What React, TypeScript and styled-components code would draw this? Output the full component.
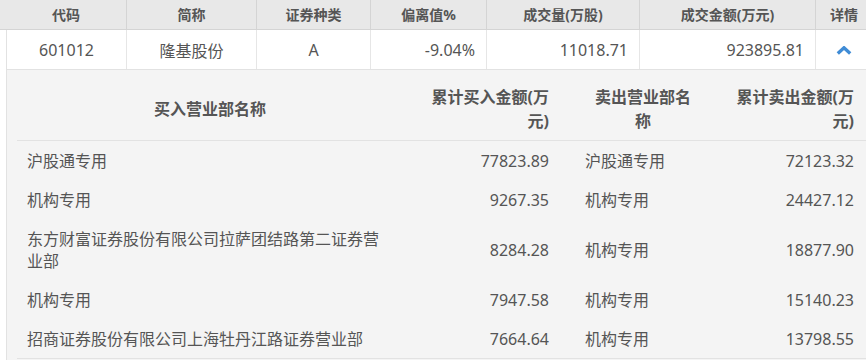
import React from "react";
import styled, { createGlobalStyle } from "styled-components";

const GlobalStyle = createGlobalStyle`
  html, body { margin: 0; padding: 0; background: #ffffff; }
  body {
    font-family: "Noto Sans", "Noto Sans CJK SC", sans-serif;
    color: #555555;
  }
`;

const Page = styled.div`
  width: 866px;
  overflow: hidden;
`;

const HeaderRow = styled.div`
  display: grid;
  grid-template-columns: 127px 130px 114px 116px 153px 176px 50px;
  height: 29px;
  background: #e8e8e8;
  border-bottom: 1px solid #d4d4d4;
`;

const HeadCell = styled.div<{ $first?: boolean; $last?: boolean }>`
  display: flex;
  align-items: center;
  justify-content: center;
  padding-left: ${(p) => (p.$first ? "6px" : p.$last ? "6px" : "0")};
  border-right: ${(p) => (p.$last ? "none" : "1px solid #d4d4d4")};
  font-size: 14px;
  font-weight: 700;
  color: #555555;
  line-height: 29px;
  white-space: nowrap;
`;

const Body = styled.div`
  margin-left: 6px;
  border-left: 1px solid #e2e2e2;
`;

const DataRow = styled.div`
  display: grid;
  grid-template-columns: 120px 130px 114px 116px 153px 176px 1fr;
  height: 39px;
  background: #ffffff;
  border-bottom: 1px solid #e2e2e2;
`;

const Cell = styled.div<{ $align?: "left" | "center" | "right"; $last?: boolean }>`
  display: flex;
  align-items: center;
  justify-content: ${(p) =>
    p.$align === "right" ? "flex-end" : p.$align === "left" ? "flex-start" : "center"};
  padding: 0 ${(p) => (p.$align === "right" ? "11px" : "0")} 0 0;
  border-right: ${(p) => (p.$last ? "none" : "1px solid #e6e6e6")};
  font-size: 16px;
  color: #555555;
  white-space: nowrap;
`;

const ToggleIcon = styled.svg`
  width: 16px;
  height: 9px;
  margin-left: 20px;
  margin-top: 1px;
  display: block;
`;

const DetailPanel = styled.div`
  background: #f4f4f4;
  padding: 8px 0 1px 10px;
`;

const DetailTable = styled.div`
  display: grid;
  grid-template-columns: 386px 156px 154px 1fr;
`;

type Align = "left" | "center" | "right";

const DetailHead = styled.div<{ $align: Align; $pl: number; $pr: number }>`
  display: flex;
  align-items: center;
  justify-content: ${(p) =>
    p.$align === "right" ? "flex-end" : p.$align === "left" ? "flex-start" : "center"};
  text-align: ${(p) => p.$align};
  padding: 7px ${(p) => p.$pr}px 7px ${(p) => p.$pl}px;
  border-bottom: 1px solid #e2e2e2;
  font-size: 16px;
  font-weight: 700;
  line-height: 24px;
  color: #555555;
`;

const DetailCell = styled.div<{ $align: Align; $pl: number; $pr: number; $lastRow?: boolean }>`
  display: flex;
  align-items: center;
  justify-content: ${(p) => (p.$align === "right" ? "flex-end" : "flex-start")};
  text-align: ${(p) => p.$align};
  padding: 9px ${(p) => p.$pr}px 8px ${(p) => p.$pl}px;
  border-bottom: ${(p) => (p.$lastRow ? "1px solid #e2e2e2" : "none")};
  font-size: 16px;
  line-height: 22px;
  color: #555555;
`;

const heads = ["代码", "简称", "证券种类", "偏离值%", "成交量(万股)", "成交金额(万元)", "详情"];

const rows: [string, string, string, string][] = [
  ["沪股通专用", "77823.89", "沪股通专用", "72123.32"],
  ["机构专用", "9267.35", "机构专用", "24427.12"],
  ["东方财富证券股份有限公司拉萨团结路第二证券营业部", "8284.28", "机构专用", "18877.90"],
  ["机构专用", "7947.58", "机构专用", "15140.23"],
  ["招商证券股份有限公司上海牡丹江路证券营业部", "7664.64", "机构专用", "13798.55"],
];

const cols: { align: Align; headAlign: Align; pl: number; pr: number; hpl: number; hpr: number }[] = [
  { align: "left", headAlign: "center", pl: 10, pr: 10, hpl: 10, hpr: 10 },
  { align: "right", headAlign: "right", pl: 14, pr: 10, hpl: 14, hpr: 10 },
  { align: "left", headAlign: "center", pl: 26, pr: 10, hpl: 30, hpr: 16 },
  { align: "right", headAlign: "right", pl: 10, pr: 12, hpl: 10, hpr: 12 },
];

const detailHeads = ["买入营业部名称", "累计买入金额(万元)", "卖出营业部名称", "累计卖出金额(万元)"];

export default function App() {
  return (
    <Page>
      <GlobalStyle />
      <HeaderRow>
        {heads.map((h, i) => (
          <HeadCell key={h} $first={i === 0} $last={i === heads.length - 1}>
            {h}
          </HeadCell>
        ))}
      </HeaderRow>
      <Body>
        <DataRow>
          <Cell>601012</Cell>
          <Cell>隆基股份</Cell>
          <Cell>A</Cell>
          <Cell $align="right">-9.04%</Cell>
          <Cell $align="right">11018.71</Cell>
          <Cell $align="right">923895.81</Cell>
          <Cell $last $align="left">
            <ToggleIcon viewBox="0 0 16 9">
              <polyline
                points="1.8,7.4 8,1.8 14.2,7.4"
                fill="none"
                stroke="#3f8cd6"
                strokeWidth="3.4"
                strokeLinejoin="miter"
              />
            </ToggleIcon>
          </Cell>
        </DataRow>
        <DetailPanel>
          <DetailTable>
            {detailHeads.map((h, i) => (
              <DetailHead key={h} $align={cols[i].headAlign} $pl={cols[i].hpl} $pr={cols[i].hpr}>
                {h}
              </DetailHead>
            ))}
            {rows.map((r, ri) =>
              r.map((v, ci) => (
                <DetailCell
                  key={`${ri}-${ci}`}
                  $align={cols[ci].align}
                  $pl={cols[ci].pl}
                  $pr={cols[ci].pr}
                  $lastRow={ri === rows.length - 1}
                >
                  {v}
                </DetailCell>
              ))
            )}
          </DetailTable>
        </DetailPanel>
      </Body>
    </Page>
  );
}
